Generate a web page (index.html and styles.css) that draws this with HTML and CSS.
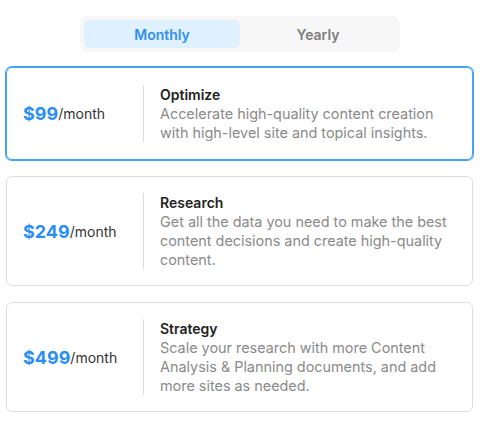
FILE: index.html
```html
<!DOCTYPE html>
<html>
<head>
<meta charset="utf-8">
<link rel="stylesheet" href="styles.css">
</head>
<body>
<div class="page">
  <div class="toggle">
    <div class="toggle-btn active">Monthly</div>
    <div class="toggle-btn">Yearly</div>
  </div>
  <div class="plans">
    <div class="plan selected">
      <div class="price"><span class="amount">$99</span><span class="per">/month</span></div>
      <div class="info">
        <div class="title">Optimize</div>
        <div class="desc">Accelerate high-quality content creation with high-level site and topical insights.</div>
      </div>
    </div>
    <div class="plan">
      <div class="price"><span class="amount">$249</span><span class="per">/month</span></div>
      <div class="info">
        <div class="title">Research</div>
        <div class="desc">Get all the data you need to make the best content decisions and create high-quality content.</div>
      </div>
    </div>
    <div class="plan">
      <div class="price"><span class="amount">$499</span><span class="per">/month</span></div>
      <div class="info">
        <div class="title">Strategy</div>
        <div class="desc">Scale your research with more Content Analysis &amp; Planning documents, and add more sites as needed.</div>
      </div>
    </div>
  </div>
</div>
</body>
</html>
```
FILE: styles.css
```css
* { box-sizing: border-box; }
html, body { margin: 0; padding: 0; background: #ffffff; }
body { font-family: Inter, "Noto Sans", sans-serif; color: #222; }
.page { width: 480px; padding-top: 16px; display: flex; flex-direction: column; align-items: center; }
.toggle {
  width: 320px; height: 36px; padding: 4px;
  background: #f7f7f7; border-radius: 8px;
  display: flex;
}
.toggle-btn {
  flex: 1; border-radius: 6px;
  display: flex; align-items: center; justify-content: center;
  font-size: 14px; font-weight: 600; color: #7d7d7d;
}
.toggle-btn.active { background: #dff0fe; color: #2f90f3; }
.plans {
  align-self: stretch; margin: 15px 7px 0 6px;
  display: flex; flex-direction: column; gap: 16px;
}
.plan {
  display: flex; align-items: stretch;
  border: 1px solid #dedede; border-radius: 6px;
  padding: 16px 0;
}
.plan.selected { border-color: #47a2f4; box-shadow: 0 0 0 1px #47a2f4; padding: 17px 0; }
.price {
  width: 137px; padding-left: 16px;
  display: flex; align-items: center;
  border-right: 1px solid #dcdcdc;
  font-size: 14px; color: #333;
}
.amount { font-size: 18px; font-weight: 700; color: #2b8ff1; }
.info { flex: 1; padding-left: 16px; padding-right: 16px; line-height: 19px; font-size: 14.4px; }
.title { font-size: 14px; font-weight: 600; color: #222; }
.desc { color: #8a8a8a; }
```
